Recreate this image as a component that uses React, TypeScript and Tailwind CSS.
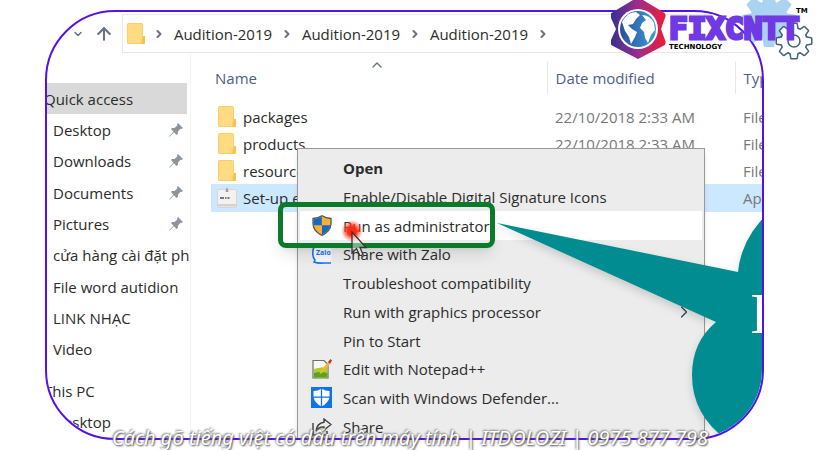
import React from 'react';
import { ArrowUp, ChevronDown, ChevronRight, ChevronUp } from 'lucide-react';

interface MenuEntry {
  label: string;
  icon?: React.ReactNode;
  bold?: boolean;
  active?: boolean;
  submenu?: boolean;
}

interface FileEntry {
  name: string;
  date: string;
  type: string;
  selected?: boolean;
}

function FolderIcon({ className }: { className: string }) {
  return (
    <svg viewBox="0 0 18 21" preserveAspectRatio="none" className={className} aria-hidden="true">
      <path d="M0 1.5Q0 0 1.5 0H14.5Q16 0 16 1.5V13H18V19.5Q18 21 16.5 21H1.5Q0 21 0 19.5Z" fill="#fbcf62" />
      <path d="M1 1H15V20H1Z" fill="#ffdc83" />
      <path d="M16.5 13L14.5 17V21H16.5Q18 21 18 19.5V13Z" fill="#f6c352" />
    </svg>
  );
}

function SetupIcon() {
  return (
    <svg viewBox="0 0 20 20" className="h-5 w-5" aria-hidden="true">
      <rect x="0.5" y="1.5" width="19" height="18" rx="1.5" fill="#f4f2f0" stroke="#d6d6d6" />
      <path d="M1 16H19V18.5H1Z" fill="#d4d2d0" />
      <path d="M10 0V4M8.5 3H11.5" stroke="#888" strokeWidth="1.2" />
      <path d="M3 10H7M8 10H9.5M10.5 10H12.5" stroke="#777" strokeWidth="2" />
    </svg>
  );
}

function PinIcon() {
  return (
    <svg viewBox="0 0 14 14" className="h-3.5 w-3.5" aria-hidden="true">
      <path d="M9 0L14 5L12.5 6L11.5 5.8L9 8.5L8.8 11L7.5 12L5 9.2L0.8 13.5L0 14L0.6 12.8L4.5 8.8L2 6L3 5L5.5 5L8.3 2.5L8 1.2Z" fill="#8d949b" />
    </svg>
  );
}

function ShieldIcon() {
  return (
    <svg viewBox="0 0 20 21" className="h-[21px] w-5" aria-hidden="true">
      <path d="M10 0.8Q14 3.3 19 3.5V9Q18.5 16.5 10 20.3Q1.5 16.5 1 9V3.5Q6 3.3 10 0.8Z" fill="#f9b02d" stroke="#4d5a66" strokeWidth="1.3" />
      <path d="M9.8 1.8V10.3H1.8Q1.6 7 1.7 4.2Q6.500 3.8 9.8 1.8Z" fill="#1568c8" />
      <path d="M10 10.3H18.2Q17 16.2 10 19.5Z" fill="#1568c8" />
    </svg>
  );
}

function ZaloIcon() {
  return (
    <svg viewBox="0 0 20 20" className="h-5 w-5" aria-hidden="true">
      <rect x="1.5" y="1" width="18" height="18" rx="5" fill="#f5f8fc" />
      <path d="M4 1Q0.8 3 0.8 9Q0.8 14 3 16L2 18Q6 19.5 12 19H19" fill="none" stroke="#1873ea" strokeWidth="1.6" />
      <text x="4" y="11" fontSize="7" fontWeight="bold" fontFamily="Open Sans, sans-serif" fill="#1873ea">Zalo</text>
    </svg>
  );
}

function NotepadIcon() {
  return (
    <svg viewBox="0 0 20 20" className="h-5 w-5" aria-hidden="true">
      <path d="M1 1.5H12L16 5.5V19H1Z" fill="#f8f8f2" stroke="#6e6e6e" strokeWidth="1.2" />
      <path d="M2 10Q7 8.5 15.4 8V18.4H2Z" fill="#a9d02b" />
      <path d="M2 14Q8 12 15.4 14V18.4H2Z" fill="#5fa01f" />
      <path d="M8 13L16 3L18 5L10 14L7.5 15Z" fill="#f0b92c" />
      <path d="M16 3L18.5 0L20 1.5L18 5Z" fill="#c83226" />
    </svg>
  );
}

function DefenderIcon() {
  return (
    <svg viewBox="0 0 21 21" className="h-[21px] w-[21px]" aria-hidden="true">
      <rect width="21" height="21" fill="#1273e6" />
      <path d="M10.5 1.5Q14 4 18.5 4V10Q17.5 16 10.5 19.500Q3.5 16 2.500 10V4Q7 4 10.5 1.5Z" fill="#fff" />
      <path d="M10.5 1V20M2 10.2H19" stroke="#1273e6" strokeWidth="1.3" />
    </svg>
  );
}

function ShareIcon() {
  return (
    <svg viewBox="0 0 20 18" className="h-[18px] w-5" fill="none" stroke="#3d3d3d" strokeWidth="1.4" aria-hidden="true">
      <path d="M1 5V17H15V13" />
      <path d="M12 1L19 6.5L12 12V9Q7 8.5 4 13Q5 5 12 4.2Z" />
    </svg>
  );
}

const quickAccess = [
  { label: 'Desktop', pinned: true },
  { label: 'Downloads', pinned: true },
  { label: 'Documents', pinned: true },
  { label: 'Pictures', pinned: true },
  { label: 'cửa hàng cài đặt ph', pinned: false },
  { label: 'File word autidion', pinned: false },
  { label: 'LINK NHẠC', pinned: false },
  { label: 'Video', pinned: false },
];

const files: FileEntry[] = [
  { name: 'packages', date: '22/10/2018 2:33 AM', type: 'File folder' },
  { name: 'products', date: '22/10/2018 2:33 AM', type: 'File folder' },
  { name: 'resources', date: '22/10/2018 2:33 AM', type: 'File folder' },
  { name: 'Set-up.exe', date: '', type: 'Application', selected: true },
];

const menuEntries: MenuEntry[] = [
  { label: 'Open', bold: true },
  { label: 'Enable/Disable Digital Signature Icons' },
  { label: 'Run as administrator', icon: <ShieldIcon />, active: true },
  { label: 'Share with Zalo', icon: <ZaloIcon /> },
  { label: 'Troubleshoot compatibility' },
  { label: 'Run with graphics processor', submenu: true },
  { label: 'Pin to Start' },
  { label: 'Edit with Notepad++', icon: <NotepadIcon /> },
  { label: 'Scan with Windows Defender...', icon: <DefenderIcon /> },
  { label: 'Share', icon: <ShareIcon /> },
];

function AddressBar() {
  return (
    <header className="flex items-center pt-0.5 pl-[25px]">
      <ChevronDown className="h-3 w-3 text-gray-500" strokeWidth={3} />
      <button aria-label="Up" className="ml-2.5 text-gray-500">
        <ArrowUp className="h-5 w-5" strokeWidth={2.5} />
      </button>
      <nav className="ml-2 flex h-[39px] flex-1 items-center border border-gray-200 pl-1">
        <FolderIcon className="h-[21px] w-[18px]" />
        {['Audition-2019', 'Audition-2019', 'Audition-2019'].map((part, i) => (
          <React.Fragment key={i}>
            <ChevronRight className="mx-2 h-3 w-3 text-gray-500" strokeWidth={4} />
            <a href="#" className="w-[100px] text-center whitespace-nowrap">{part}</a>
          </React.Fragment>
        ))}
        <ChevronRight className="mx-2 h-3 w-3 text-gray-500" strokeWidth={4} />
      </nav>
    </header>
  );
}

function Sidebar() {
  return (
    <aside className="w-36 shrink-0 border-r border-gray-100 pt-[30px] pr-[3px] whitespace-nowrap">
      <ul className="flex h-[282px] flex-col">
        <li className="flex flex-1 items-center bg-[#d9d9d9]">
          <span className="-ml-[3px]">Quick access</span>
        </li>
        {quickAccess.map((item) => (
          <li key={item.label} className="flex flex-1 items-center justify-between pr-1 pl-1.5">
            {item.label}
            {item.pinned && <PinIcon />}
          </li>
        ))}
      </ul>
      <ul className="mt-2.5">
        <li className="flex h-[31px] items-center">
          <span className="-ml-[3px]">This PC</span>
        </li>
        <li className="flex h-[31px] items-center pl-1.5">Desktop</li>
      </ul>
    </aside>
  );
}

function FileTable() {
  return (
    <div className="relative min-w-0 flex-1 pt-[9px] pl-5">
      <ChevronUp className="absolute top-1 left-[178px] h-4 w-4 text-gray-500" />
      <table className="w-full table-fixed border-collapse whitespace-nowrap">
        <thead className="text-[#4d6082]">
          <tr className="h-8 text-left">
            <th className="w-[336px] border-r border-gray-200 pl-1 font-normal">Name</th>
            <th className="w-[188px] border-r border-gray-200 pl-2 font-normal">Date modified</th>
            <th className="pl-2 font-normal">Type</th>
          </tr>
          <tr className="h-[9px]" />
        </thead>
        <tbody>
          {files.map((file) => (
            <tr key={file.name} className={file.selected ? 'h-7 bg-[#cce8ff]' : 'h-[27px]'}>
              <td className="p-0 pl-1.5">
                <div className="flex items-center gap-1.5">
                  <span className="flex w-5 justify-center">
                    {file.selected ? <SetupIcon /> : <FolderIcon className="h-[21px] w-[18px]" />}
                  </span>
                  {file.name}
                </div>
              </td>
              <td className="p-0 pl-2 text-[#777]">{file.date}</td>
              <td className="p-0 pl-2 text-[#777]">{file.type}</td>
            </tr>
          ))}
        </tbody>
      </table>
    </div>
  );
}

function ContextMenu() {
  return (
    <div className="absolute top-[136px] left-[250px] w-[408px] border border-[#999] bg-[#ececec] px-0.5 py-[5px] shadow-md">
      <ul className="flex h-[287px] flex-col">
        {menuEntries.map((entry) => (
          <li key={entry.label} className="flex-1">
            <button
              className={`flex h-full w-full items-center text-left ${entry.active ? 'bg-white' : ''} ${entry.bold ? 'font-bold' : ''}`}
            >
              <span className="flex w-[43px] justify-center">{entry.icon}</span>
              <span className="flex-1">{entry.label}</span>
              {entry.submenu && <ChevronRight className="mr-2 h-5 w-5 text-gray-700" strokeWidth={1.5} />}
            </button>
          </li>
        ))}
      </ul>
    </div>
  );
}

function Callout() {
  return (
    <>
      <div className="absolute top-[190px] left-[231px] h-[46px] w-[217px] rounded-lg border-[5px] border-[#0b7a2b] shadow-lg" />
      <svg viewBox="0 0 272 220" className="absolute top-[208px] left-[448px] h-[220px] w-[272px] drop-shadow-lg" aria-hidden="true">
        <path d="M2 3L243 52Q246 20 272 -6V220H232Q197 195 197 155Q197 122 221 102Z" fill="#008c90" />
      </svg>
      <span className="absolute top-[269px] left-[703px] font-['Liberation_Serif',serif] text-[58px] leading-[66px] text-white">I</span>
      <svg viewBox="0 0 30 36" className="absolute top-[208px] left-[294px] h-9 w-[30px]" aria-hidden="true">
        <defs>
          <radialGradient id="click">
            <stop offset="0.4" stopColor="#ff2a12" />
            <stop offset="1" stopColor="#ff5a40" stopOpacity="0" />
          </radialGradient>
        </defs>
        <circle cx="11" cy="11" r="11" fill="url(#click)" />
        <path d="M11 12V33L15.5 28.5L19 36L22 34.5L19 27.5H25Z" fill="#e8e8e8" fillOpacity="0.5" stroke="#333" strokeWidth="1.3" />
      </svg>
    </>
  );
}

const teeth = [0, 45, 90, 135, 180, 225, 270, 315];

function Logo() {
  return (
    <div className="absolute top-0 right-1 flex h-[62px] w-[205px]">
      <svg viewBox="0 0 205 62" className="absolute inset-0" aria-hidden="true">
        <defs>
          <linearGradient id="hex">
            <stop offset="0" stopColor="#35308f" />
            <stop offset="0.5" stopColor="#9b2d8e" />
            <stop offset="1" stopColor="#ee1c35" />
          </linearGradient>
          <linearGradient id="globe">
            <stop offset="0" stopColor="#2b4f9e" />
            <stop offset="1" stopColor="#3f9ad6" />
          </linearGradient>
        </defs>
        <g fill="#a9d3f1" transform="translate(158 20)">
          <circle r="19" />
          {teeth.map((a) => (
            <path key={a} d="M-7 -16L-5 -27H5L7 -16Z" transform={`rotate(${a})`} />
          ))}
        </g>
        <g transform="translate(183 41)">
          <g fill="#fff" stroke="#416377" strokeWidth="3" strokeLinejoin="round">
            <circle r="12.5" />
            {teeth.map((a) => (
              <path key={a} d="M-3.5 -11L-2.5 -17H2.5L3.5 -11Z" transform={`rotate(${a})`} />
            ))}
          </g>
          <g fill="#fff">
            <circle r="12.5" />
            {teeth.map((a) => (
              <path key={a} d="M-3.5 -11L-2.5 -17H2.5L3.5 -11Z" transform={`rotate(${a})`} />
            ))}
          </g>
          <circle r="6" fill="none" stroke="#416377" strokeWidth="1.5" />
        </g>
        <path d="M27 -3L52 12Q56 14 54 18L50 29L54 40Q56 44 52 46L27 59L2 46Q-2 44 0 40L5 29L0 18Q-2 14 2 12Z" fill="url(#hex)" />
        <circle cx="27" cy="29" r="20" fill="#fff" />
        <circle cx="27" cy="29" r="18" fill="url(#globe)" />
        <path d="M11 22Q16 12 25 12L29 15L25 19L22 24L17 25L21 29L26 32L24 37L20 44L18 37L14 31Z" fill="#fff" />
        <path d="M31 15Q39 15 43 23L44 30L40 35L37 43L34 38L33 32L29 28L31 23L35 20Z" fill="#fff" />
      </svg>
      <div className="relative ml-[58px] flex flex-col pt-3.5 font-['DejaVu_Sans_Mono',monospace] font-bold text-black">
        <span className="text-[31px] leading-[29px] text-[#7139e4] [-webkit-text-stroke:3px_#7139e4] [text-shadow:-1px_0_#52c8f4,1px_1px_#c25af0]">FIXCNTT</span>
        <span className="font-['DejaVu_Sans',sans-serif] text-[7px] leading-[8px]">TECHNOLOGY</span>
        <span className="absolute top-[7px] left-[127px] font-['DejaVu_Sans',sans-serif] text-[7px] leading-[8px]">TM</span>
      </div>
    </div>
  );
}

export default function App() {
  return (
    <main className="relative flex h-screen overflow-hidden bg-white py-2.5 pr-14 pl-[45px] font-['Open_Sans',sans-serif] text-[15px] leading-5 text-[#2b2b2b]">
      <section className="relative flex min-w-0 flex-1 flex-col overflow-hidden rounded-[70px] border-2 border-[#5512e8]">
        <AddressBar />
        <div className="flex flex-1">
          <Sidebar />
          <FileTable />
        </div>
        <ContextMenu />
        <Callout />
      </section>
      <Logo />
      <p className="absolute inset-x-0 bottom-0 text-center font-['Noto_Sans',sans-serif] text-[20px] leading-6 whitespace-nowrap text-white italic [text-shadow:1px_1px_2px_#444,-1px_-1px_2px_#888]">
        Cách gõ tiếng việt có dấu trên máy tính | ITDOLOZI | 0975 877 798
      </p>
    </main>
  );
}
